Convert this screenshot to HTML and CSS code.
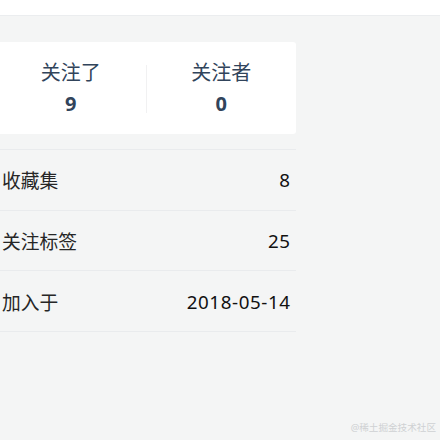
FILE: index.html
```html
<!DOCTYPE html>
<html lang="zh">
<head>
<meta charset="utf-8">
<link rel="stylesheet" href="styles.css">
</head>
<body>
<div class="topbar"></div>
<div class="sidebar">
  <div class="follow-card">
    <div class="stat">
      <div class="stat-label">关注了</div>
      <div class="stat-num">9</div>
    </div>
    <div class="divider"></div>
    <div class="stat">
      <div class="stat-label">关注者</div>
      <div class="stat-num">0</div>
    </div>
  </div>
  <div class="info-list">
    <div class="info-row"><span>收藏集</span><span class="val">8</span></div>
    <div class="info-row"><span>关注标签</span><span class="val">25</span></div>
    <div class="info-row"><span>加入于</span><span class="val">2018-05-14</span></div>
  </div>
</div>
<div class="watermark">@稀土掘金技术社区</div>
</body>
</html>
```
FILE: styles.css
```css
html, body {
  margin: 0;
  padding: 0;
}
body {
  width: 440px;
  height: 440px;
  overflow: hidden;
  background: #f4f5f5;
  font-family: "Noto Sans", "Noto Sans CJK SC", sans-serif;
  position: relative;
}
.topbar {
  height: 15px;
  background: #fff;
  border-bottom: 1px solid #ebedef;
}
.sidebar {
  width: 300px;
  margin: 26px 0 0 -4px;
}
.follow-card {
  display: flex;
  align-items: center;
  background: #fff;
  border-radius: 3px;
  padding: 17px 0 16px;
}
.stat {
  flex: 1;
  text-align: center;
  color: #31445b;
}
.stat-label {
  font-size: 20px;
  line-height: 28px;
}
.stat-num {
  font-size: 20px;
  line-height: 28px;
  font-weight: 700;
  margin-top: 3px;
}
.divider {
  width: 1px;
  height: 48px;
  background: #f1f1f2;
}
.info-list {
  margin-top: 15px;
  border-top: 1px solid #e9ebed;
}
.info-row {
  display: flex;
  justify-content: space-between;
  align-items: center;
  box-sizing: border-box;
  height: 60.7px;
  padding: 0 6px;
  border-bottom: 1px solid #e9ebed;
  font-size: 18.75px;
  color: #262626;
}
.val {
  color: #111;
  letter-spacing: 0.6px;
  margin-right: -0.6px;
}
.watermark {
  position: absolute;
  right: 4px;
  bottom: 6px;
  font-size: 9.6px;
  color: #cfd1d3;
}
```
